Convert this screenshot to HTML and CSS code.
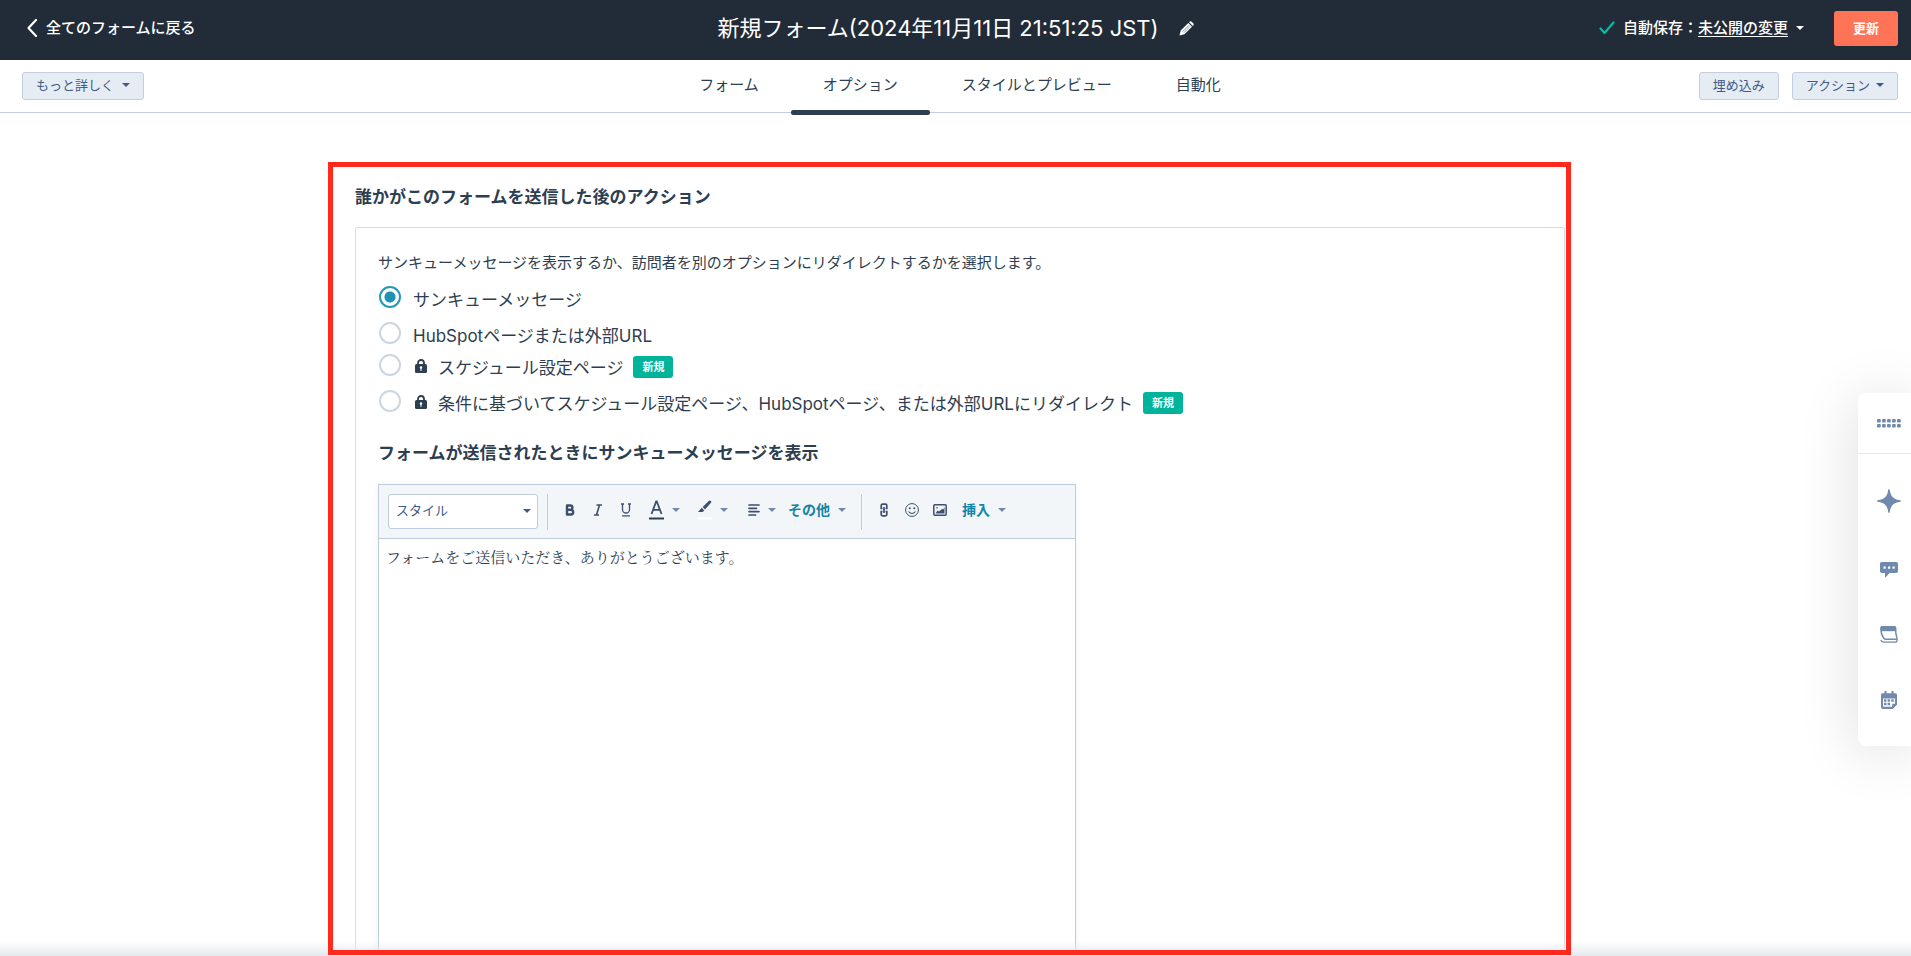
FILE: index.html
```html
<!DOCTYPE html>
<html lang="ja">
<head>
<meta charset="utf-8">
<meta name="viewport" content="width=device-width, initial-scale=1">
<title>新規フォーム</title>
<link rel="stylesheet" href="styles.css">
</head>
<body>
<header class="topbar">
  <a class="back" href="#">
    <svg width="12" height="20" viewBox="0 0 12 20"><path d="M10 2 2.500 10 10 18" fill="none" stroke="currentColor" stroke-width="2.200" stroke-linecap="round" stroke-linejoin="round"/></svg>
    <span>全てのフォームに戻る</span>
  </a>
  <div class="title-group">
    <h1 class="title">新規フォーム(2024年11月11日 21:51:25 JST)</h1>
    <button class="icon-button edit" type="button" aria-label="名前を編集">
      <svg width="15" height="15" viewBox="0 0 15 15"><path d="M.5 14.500 1.700 9.600 9.300 2l3.700 3.700-7.600 7.600zM10.100 1.200l.7-.6q.8-.6 1.600 0l2 2q.7.800 0 1.600l-.6.700z" fill="currentColor"/><path d="M3.600 10.600 10 4.200M5 11.600 11.200 5.400" stroke="#222c38" stroke-width=".5"/></svg>
    </button>
  </div>
  <div class="top-actions">
    <svg class="check" width="16" height="14" viewBox="0 0 16 14"><path d="m1.500 7.500 4 4.500 9-10.500" fill="none" stroke="currentColor" stroke-width="2.200" stroke-linecap="round" stroke-linejoin="round"/></svg>
    <span class="autosave">自動保存：<button class="link-button" type="button">未公開の変更</button></span>
    <span class="caret light"></span>
    <button class="update" type="button">更新</button>
  </div>
</header>

<div class="subbar">
  <div class="sub-left">
    <button class="small-button more" type="button">もっと詳しく<span class="caret"></span></button>
  </div>
  <nav class="tabs">
    <a class="tab" href="#">フォーム</a>
    <a class="tab active" href="#" aria-current="page">オプション</a>
    <a class="tab" href="#">スタイルとプレビュー</a>
    <a class="tab" href="#">自動化</a>
  </nav>
  <div class="sub-right">
    <button class="small-button" type="button">埋め込み</button>
    <button class="small-button actions" type="button">アクション<span class="caret"></span></button>
  </div>
</div>

<main class="content">
  <section class="frame">
    <h2 class="heading">誰かがこのフォームを送信した後のアクション</h2>
    <div class="card">
      <fieldset class="options">
        <legend class="description">サンキューメッセージを表示するか、訪問者を別のオプションにリダイレクトするかを選択します。</legend>
        <label class="option"><input class="radio" type="radio" name="after" checked><span>サンキューメッセージ</span></label>
        <label class="option tight"><input class="radio" type="radio" name="after"><span>HubSpotページまたは外部URL</span></label>
        <label class="option"><input class="radio" type="radio" name="after">
          <svg class="lock" width="12" height="14" viewBox="0 0 12 14"><path d="M3 6V4a3 3 0 0 1 6 0v2" fill="none" stroke="currentColor" stroke-width="1.800"/><rect y="5" width="12" height="9" rx="1.500" fill="currentColor"/><circle cx="6" cy="8.500" r="1.200" fill="#fff"/><path d="M6 8.500V12" stroke="#fff" stroke-width="1"/></svg>
          <span>スケジュール設定ページ</span><span class="badge">新規</span></label>
        <label class="option"><input class="radio" type="radio" name="after">
          <svg class="lock" width="12" height="14" viewBox="0 0 12 14"><path d="M3 6V4a3 3 0 0 1 6 0v2" fill="none" stroke="currentColor" stroke-width="1.800"/><rect y="5" width="12" height="9" rx="1.500" fill="currentColor"/><circle cx="6" cy="8.500" r="1.200" fill="#fff"/><path d="M6 8.500V12" stroke="#fff" stroke-width="1"/></svg>
          <span>条件に基づいてスケジュール設定ページ、HubSpotページ、または外部URLにリダイレクト</span><span class="badge">新規</span></label>
      </fieldset>
      <h3 class="heading" id="message-label">フォームが送信されたときにサンキューメッセージを表示</h3>
      <div class="editor">
        <div class="toolbar">
          <div class="select-wrap">
            <select class="style-select" aria-label="スタイル"><option>スタイル</option></select>
            <span class="caret select-caret"></span>
          </div>
          <span class="divider"></span>
          <div class="group">
            <button class="tool" type="button" aria-label="太字"><svg width="10" height="12" viewBox="0 0 10 12"><path d="M2 1.500h3.300a2.100 2.100 0 0 1 0 4.300H2zM2 5.800h3.800a2.300 2.300 0 0 1 0 4.700H2z" fill="none" stroke="currentColor" stroke-width="2.400" stroke-linejoin="round"/></svg></button>
            <button class="tool" type="button" aria-label="斜体"><svg width="10" height="12" viewBox="0 0 10 12"><path d="M3.500 1H9M1 11h5M6.500 1l-3 10" fill="none" stroke="currentColor" stroke-width="1.600"/></svg></button>
            <button class="tool" type="button" aria-label="下線"><svg width="10" height="14" viewBox="0 0 10 14"><path d="M1.500 1v5.500a3.500 3.500 0 0 0 7 0V1M0 1h3M7 1h3M1 12.800h8" fill="none" stroke="currentColor" stroke-width="1.300"/></svg></button>
          </div>
          <div class="group pairs">
            <button class="pair" type="button" aria-label="文字色"><svg width="15" height="20" viewBox="0 0 15 20"><path d="M2.500 14 7.200 1.500h.6L12.500 14M4.100 9.800h6.800" fill="none" stroke="currentColor" stroke-width="1.800"/><path d="M0 18.500h15" stroke="#2d3e50" stroke-width="2"/></svg><span class="caret pale"></span></button>
            <button class="pair" type="button" aria-label="蛍光ペン"><svg width="15" height="20" viewBox="0 0 15 20"><path d="M5.600 7 12 .8q1-.7 1.900.1t.1 1.900L8 9.500z" fill="currentColor"/><path d="m4.700 7.800 2.600 2.600-1.700 1.500H1z" fill="currentColor"/><path d="M0 18.500h15" stroke="#fff" stroke-width="2"/></svg><span class="caret pale"></span></button>
            <button class="pair" type="button" aria-label="配置"><svg width="15" height="14" viewBox="0 0 15 14"><path d="M4 2h10M4 5.300h7.500M4 8.600h10M4 12h6.500" stroke="currentColor" stroke-width="1.700" stroke-linecap="round"/></svg><span class="caret pale"></span></button>
          </div>
          <button class="text-tool" type="button">その他<span class="caret pale"></span></button>
          <span class="divider"></span>
          <div class="group">
            <button class="tool" type="button" aria-label="リンク"><svg width="8" height="14" viewBox="0 0 8 14"><path d="M2.500 5.500H1.200V2.500q0-1.300 1.300-1.300h3q1.300 0 1.300 1.300v3H5.500M2.500 8.500H1.200v3q0 1.300 1.300 1.300h3q1.300 0 1.300-1.300v-3H5.500M4 4v6" fill="none" stroke="currentColor" stroke-width="1.700"/></svg></button>
            <button class="tool" type="button" aria-label="絵文字"><svg width="14" height="14" viewBox="0 0 14 14"><circle cx="7" cy="7" r="6.400" fill="none" stroke="currentColor" stroke-width="1"/><circle cx="4.800" cy="5.300" r="1" fill="currentColor"/><circle cx="9.200" cy="5.300" r="1" fill="currentColor"/><path d="M3.500 8.500q3.500 4 7 0" fill="none" stroke="currentColor" stroke-width="1.100"/></svg></button>
            <button class="tool" type="button" aria-label="画像"><svg width="14" height="12" viewBox="0 0 14 12"><rect x=".8" y=".8" width="12.400" height="10.400" rx="1" fill="none" stroke="currentColor" stroke-width="1.500"/><path d="m2.500 9.500 2-3 1.500 1L9 5l1.200.5L11.500 3v6.500z" fill="currentColor"/><circle cx="4" cy="3.800" r=".8" fill="currentColor"/></svg></button>
          </div>
          <button class="text-tool insert" type="button">挿入<span class="caret pale"></span></button>
        </div>
        <textarea class="message" aria-labelledby="message-label">フォームをご送信いただき、ありがとうございます。</textarea>
      </div>
    </div>
  </section>
</main>
<div class="fade"></div>

<aside class="rail">
  <button class="rail-item first" type="button" aria-label="メニュー"><svg width="24" height="9" viewBox="0 0 24 9"><g fill="currentColor"><rect width="3.800" height="3.600" rx="1"/><rect x="5" width="3.800" height="3.600" rx="1"/><rect x="10" width="3.800" height="3.600" rx="1"/><rect x="15" width="3.800" height="3.600" rx="1"/><rect x="20" width="3.800" height="3.600" rx="1"/><rect y="5" width="3.800" height="3.600" rx="1"/><rect x="5" y="5" width="3.800" height="3.600" rx="1"/><rect x="10" y="5" width="3.800" height="3.600" rx="1"/><rect x="15" y="5" width="3.800" height="3.600" rx="1"/><rect x="20" y="5" width="3.800" height="3.600" rx="1"/></g></svg></button>
  <button class="rail-item spark" type="button" aria-label="AIアシスタント"><svg width="24" height="24" viewBox="0 0 24 24"><path d="M12 0c.8 0 .8 1.500 1.200 3.200C14.300 7.500 16.500 9.700 20.800 10.800 22.500 11.200 24 11.200 24 12s-1.500.8-3.200 1.200c-4.300 1.100-6.500 3.300-7.600 7.600C12.800 22.500 12.800 24 12 24s-.8-1.500-1.200-3.200C9.700 16.500 7.500 14.300 3.200 13.200 1.500 12.800 0 12.800 0 12s1.500-.8 3.200-1.200c4.300-1.100 6.500-3.300 7.600-7.600C11.200 1.500 11.200 0 12 0z" fill="currentColor"/></svg></button>
  <button class="rail-item" type="button" aria-label="チャット"><svg width="18" height="16" viewBox="0 0 18 16"><path d="M1.800 0h14.400Q18 0 18 1.800v7.400q0 1.800-1.800 1.800H9.500L5 16v-5H1.800Q0 11 0 9.200V1.800Q0 0 1.800 0z" fill="currentColor"/><g fill="#fff"><rect x="3.500" y="4.500" width="2.200" height="2.200"/><rect x="8" y="4.500" width="2.200" height="2.200"/><rect x="12.500" y="4.500" width="2.200" height="2.200"/></g></svg></button>
  <button class="rail-item" type="button" aria-label="ノート"><svg width="18" height="17" viewBox="0 0 18 17"><path d="M2 .7h12.500q1.200 0 1.200 1.300c-.2 4.200 0 7 1.300 10q.2 1.300-1 1.300H6q-1.600 0-2.500-1.500C1.500 9 .8 6 .8 2 .8.700 2 .7 2 .7z" fill="none" stroke="currentColor" stroke-width="1.400"/><path d="M1 .5h14.500V5.200H1z" fill="currentColor"/><path d="M.8 14q1 2.200 3 2.200h11.500q1.800 0 1.800-3" fill="none" stroke="currentColor" stroke-width="1.300"/></svg></button>
  <button class="rail-item" type="button" aria-label="カレンダー"><svg width="16" height="18" viewBox="0 0 16 18"><path d="M1.500 2.300h13Q16 2.300 16 4v9.500L11.800 18H2Q0 18 0 16V4q0-1.700 1.500-1.700z" fill="currentColor"/><path d="M4.500 0v4M11.500 0v4" stroke="currentColor" stroke-width="2"/><path d="M2 7.500h12v5.200h-2.500l-.5 3H2.800L2 15z" fill="#fff"/><path d="M3 9.500h2.500M6.600 9.500H9M10.200 9.500h2.500M3 13h2.500M6.600 13H9" stroke="currentColor" stroke-width="2.400"/></svg></button>
</aside>
</body>
</html>
```
FILE: styles.css
```css
* { box-sizing: border-box; }

body {
  margin: 0;
  height: 100vh;
  display: flex;
  flex-direction: column;
  overflow: hidden;
  background: #fff;
  color: #2d3e50;
  font-family: Inter, "Noto Sans CJK JP", sans-serif;
  font-size: 15px;
  line-height: 22px;
}

button, select, textarea { font: inherit; color: inherit; }
button { padding: 0; border: 0; background: none; cursor: pointer; }
a { color: inherit; text-decoration: none; }
svg { display: block; flex: none; }
h1, h2, h3 { margin: 0; }

.caret {
  flex: none;
  display: inline-block;
  border: 4px solid transparent;
  border-top-color: #425b84;
  border-bottom: 0;
}
.caret.light { border-top-color: #fff; }
.caret.pale { border-top-color: #7189ae; }

.topbar {
  flex: none;
  display: grid;
  grid-template-columns: 1fr auto 1fr;
  align-items: center;
  height: 60px;
  padding: 0 13px 4px;
  background: #222c38;
  color: #fff;
  font-weight: 500;
}
.back { display: flex; align-items: center; gap: 8px; justify-self: start; padding-left: 13px; }
.title-group { display: flex; align-items: center; gap: 20px; }
.title { font-size: 22px; line-height: 32px; font-weight: 400; }
.top-actions { display: flex; align-items: center; justify-content: flex-end; gap: 8px; }
.check { color: #00bda5; }
.link-button { text-decoration: underline; text-underline-offset: 3px; }
.update {
  height: 35px;
  margin-left: 22px;
  padding: 0 19px;
  border-radius: 3px;
  background: #ff7357;
  font-size: 13px;
  font-weight: 700;
}

.subbar {
  flex: none;
  display: grid;
  grid-template-columns: 1fr auto 1fr;
  align-items: center;
  height: 53px;
  padding: 0 13px 0 22px;
  border-bottom: 1px solid #c3cfdc;
}
.sub-right { display: flex; justify-content: flex-end; gap: 13px; }
.small-button {
  display: inline-flex;
  align-items: center;
  gap: 8px;
  height: 28px;
  padding: 0 13px 2px;
  border: 1px solid #c3cfde;
  border-radius: 3px;
  background: #e6ecf4;
  color: #425b84;
  font-size: 13px;
  line-height: 20px;
}
.actions { gap: 6px; }
.tabs { display: flex; margin-bottom: -3px; }
.tab {
  position: relative;
  display: flex;
  align-items: center;
  height: 55px;
  padding: 0 32px 5px;
}
.tab.active::after {
  content: "";
  position: absolute;
  inset: auto 0 0;
  height: 5px;
  border-radius: 2px;
  background: #2d3e50;
}

.content {
  flex: 1;
  min-height: 0;
  display: flex;
  padding: 49px 340px 1px 328px;
}
.frame {
  position: relative;
  flex: 1;
  min-width: 0;
  display: flex;
  flex-direction: column;
  padding: 21px 6px 0 27px;
}
.frame::after {
  content: "";
  position: absolute;
  inset: 0;
  z-index: 2;
  border: 5px solid #ff291c;
  pointer-events: none;
}
.heading { font-size: 17px; line-height: 28px; font-weight: 700; }
.card {
  flex: 1;
  min-height: 0;
  display: flex;
  flex-direction: column;
  margin-top: 16px;
  padding: 24px 22px 0;
  border: 1px solid #d9dce8;
  border-bottom: 0;
  border-radius: 3px 3px 0 0;
}
.options { margin: 0; padding: 0; border: 0; }
.description { padding: 0; margin-bottom: 12px; }
.option {
  display: flex;
  align-items: flex-start;
  width: fit-content;
  margin-bottom: 8px;
  font-size: 17px;
  line-height: 28px;
}
.option.tight { margin-bottom: 4px; }
.radio {
  appearance: none;
  flex: none;
  width: 22px;
  height: 22px;
  margin: 0 12px 0 1px;
  border: 2px solid #cbd6e2;
  border-radius: 50%;
  background: #fff;
}
.radio:checked {
  border-color: #2499b6;
  background: radial-gradient(circle, #1d93b1 0 5px, #fff 6px);
}
.lock { margin: 5px 11px 0 2px; }
.badge {
  margin: 2px 0 0 10px;
  padding: 0 9px;
  border-radius: 3px;
  background: #00b49b;
  color: #fff;
  font-size: 11px;
  line-height: 22px;
  font-weight: 700;
}
.card > .heading { margin: 13px 0 17px; }

.editor {
  flex: 1;
  min-height: 0;
  display: flex;
  flex-direction: column;
  width: 698px;
  max-width: 100%;
  border: 1px solid #bfccdd;
  border-bottom: 0;
  box-shadow: 0 0 6px #2d3e5010;
}
.toolbar {
  flex: none;
  display: flex;
  align-items: center;
  height: 54px;
  padding-left: 9px;
  border-bottom: 1px solid #bfccdd;
  background: #f3f6f9;
  color: #3d4f6e;
}
.select-wrap { position: relative; }
.style-select {
  appearance: none;
  display: block;
  width: 150px;
  height: 35px;
  padding: 0 7px 4px;
  border: 1px solid #bfccdd;
  border-radius: 3px;
  background: #fff;
  color: #425b84;
  font-size: 13px;
}
.select-caret { position: absolute; top: 15px; right: 7px; pointer-events: none; }
.divider { flex: none; width: 1px; height: 36px; margin: 0 10px 0 9px; background: #c3cbd8; }
.group { display: flex; align-items: center; gap: 4px; padding-bottom: 3px; }
.tool { display: grid; place-items: center; width: 24px; height: 28px; }
.pairs { gap: 17px; margin-left: 11px; }
.pair { display: flex; align-items: center; gap: 8px; height: 28px; }
.text-tool {
  display: flex;
  align-items: center;
  gap: 8px;
  margin: 0 6px 0 12px;
  padding-bottom: 3px;
  color: #1485a6;
  font-size: 14px;
  font-weight: 700;
}
.text-tool.insert { margin-left: 10px; }
.message {
  flex: 1;
  padding: 7px;
  border: 0;
  outline: 0;
  resize: none;
  background: #fff;
  font-family: "Noto Serif CJK JP", "Noto Serif JP", "Noto Sans CJK JP", serif;
}

.fade {
  position: fixed;
  inset: auto 0 0;
  z-index: 1;
  height: 15px;
  background: linear-gradient(#e6eaf000, #e6eaf0);
}

.rail {
  position: fixed;
  top: 393px;
  right: 0;
  display: flex;
  flex-direction: column;
  width: 53px;
  padding-bottom: 14px;
  border-radius: 8px 0 0 8px;
  background: #fff;
  color: #7189ac;
  box-shadow: 0 6px 60px #00000024;
}
.rail-item { display: grid; place-items: center; height: 65px; padding-left: 9px; }
.rail-item.first { height: 61px; border-bottom: 1px solid #e6eaf0; }
.rail-item.spark { height: 83px; padding-top: 11px; }
```
